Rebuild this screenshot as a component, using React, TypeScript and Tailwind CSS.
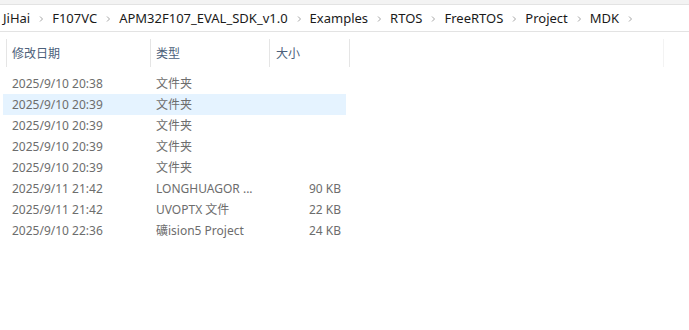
import React from "react";

const crumbs = ["JiHai", "F107VC", "APM32F107_EVAL_SDK_v1.0", "Examples", "RTOS", "FreeRTOS", "Project", "MDK"];

const rows = [
  { d: "2025/9/10 20:38", t: "文件夹", s: "", sel: false },
  { d: "2025/9/10 20:39", t: "文件夹", s: "", sel: true },
  { d: "2025/9/10 20:39", t: "文件夹", s: "", sel: false },
  { d: "2025/9/10 20:39", t: "文件夹", s: "", sel: false },
  { d: "2025/9/10 20:39", t: "文件夹", s: "", sel: false },
  { d: "2025/9/11 21:42", t: "LONGHUAGOR ...", s: "90 KB", sel: false },
  { d: "2025/9/11 21:42", t: "UVOPTX 文件", s: "22 KB", sel: false },
  { d: "2025/9/10 22:36", t: "礦ision5 Project", s: "24 KB", sel: false },
];

function Chevron() {
  return (
    <svg width="6" height="8" viewBox="0 0 6 8" className="mx-[8px] shrink-0 mt-[2px]">
      <path d="M2 1.5 L4.5 4 L2 6.5" fill="none" stroke="#a6a6a6" strokeWidth="1" />
    </svg>
  );
}

export default function App() {
  return (
    <div
      className="w-[689px] h-[330px] bg-white overflow-hidden text-[12px]"
      style={{ fontFamily: '"Noto Sans", "Noto Sans CJK SC", sans-serif' }}
    >
      <div className="h-[4px] bg-[#f3f3f3] border-b border-[#e3e3e3] box-content" />
      <div className="h-[27px] flex items-center pl-[3px] border-b border-[#e3e3e3] text-[13px] text-[#1a1a1a]">
        {crumbs.map((c) => (
          <React.Fragment key={c}>
            <span className="leading-none">{c}</span>
            <Chevron />
          </React.Fragment>
        ))}
      </div>
      <div className="pt-[7px]">
        <div className="flex h-[28px] pl-[6px] text-[#4c607a]">
          <div className="w-[144px] border-l border-[#e5e5e5] flex items-center pl-[5px] pt-[2px]">修改日期</div>
          <div className="w-[119px] border-l border-[#e5e5e5] flex items-center pl-[5px] pt-[2px]">类型</div>
          <div className="w-[80px] border-l border-[#e5e5e5] flex items-center pl-[6px] pt-[2px]">大小</div>
          <div className="w-[314px] border-l border-[#e5e5e5]" />
          <div className="border-l border-[#f3f3f3]" />
        </div>
        <div className="pt-[6px]">
          {rows.map((r, i) => (
            <div
              key={i}
              className={`flex h-[21px] items-center ml-[3px] w-[343px] text-[#6d6d6d] ${r.sel ? "bg-[#e5f3ff]" : ""}`}
            >
              <div className="w-[147px] pl-[9px]">{r.d}</div>
              <div className="w-[120px] pl-[6px]">{r.t}</div>
              <div className="w-[71px] text-right">{r.s}</div>
            </div>
          ))}
        </div>
      </div>
    </div>
  );
}
